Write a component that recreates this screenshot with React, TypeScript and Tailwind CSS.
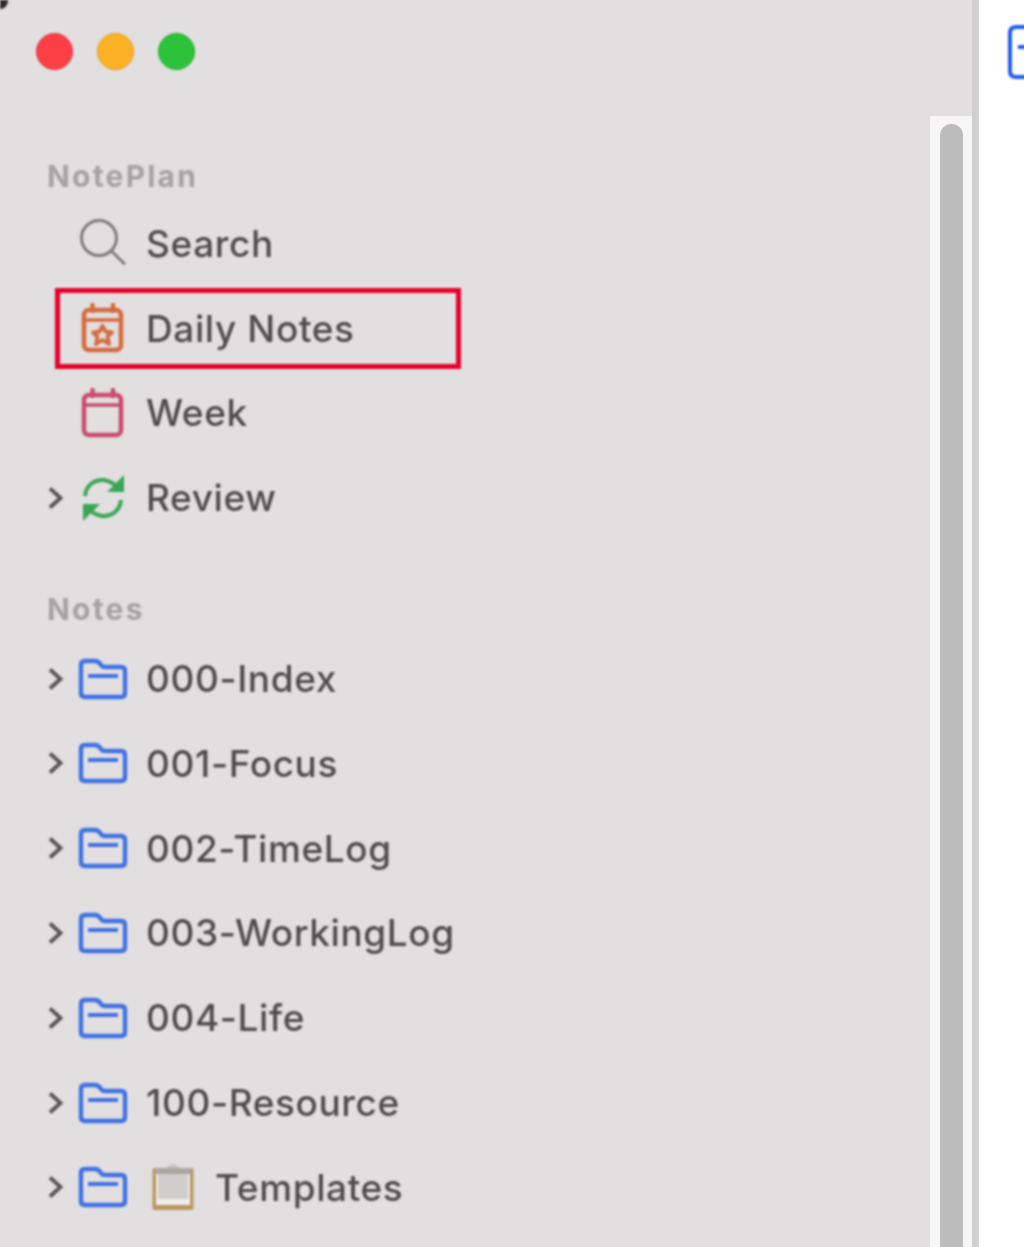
import React from 'react';

const Chevron = () => (
  <svg width="17" height="26" viewBox="0 0 17 26" fill="none" stroke="#565556" strokeWidth="3.8">
    <path d="M3 3.5 L13.5 13 L3 22.5" />
  </svg>
);

const SearchIcon = () => (
  <svg width="50" height="50" viewBox="0 0 50 50" fill="none" stroke="#7d7c7d" strokeWidth="3">
    <circle cx="21" cy="20" r="17.5" />
    <path d="M33.5 33 L47 46.5" />
  </svg>
);

const CalendarIcon = ({ color, star }: { color: string; star?: boolean }) => (
  <svg width="50" height="50" viewBox="0 0 50 50" fill="none" stroke={color} strokeWidth="4.5">
    <rect x="6" y="7" width="37" height="40" rx="5" />
    <path d="M6 17 H43" strokeWidth="3.5" />
    <path d="M14.5 2 V8 M35 2 V8" strokeWidth="4.5" strokeLinecap="round" />
    {star && (
      <path
        d="M24.500 23 L27.500 28.500 L34 29.500 L29.500 33.500 L31 41 L24.500 37 L18 41 L19.500 33.500 L15 29.500 L21.500 28.500 Z"
        strokeWidth="3.8"
        strokeLinejoin="round"
      />
    )}
  </svg>
);

const ReviewIcon = () => (
  <svg width="50" height="50" viewBox="0 0 50 50" fill="none" stroke="#3aa655" strokeWidth="4">
    <path d="M7 23 C8 12 17 6 26 7 C32 8 36 10 40 15" />
    <path d="M43 27 C42 38 33 44 24 43 C18 42 14 40 10 35" />
    <path d="M46 2 V19 H29 Z" fill="#3aa655" stroke="none" />
    <path d="M5 48 V31 H22 Z" fill="#3aa655" stroke="none" />
  </svg>
);

const FolderIcon = () => (
  <svg width="50" height="42" viewBox="0 0 50 42" fill="none" stroke="#3f72e4" strokeWidth="4.4">
    <path
      d="M3 7 C3 4 4.500 3 7 3 H17 C20 3 21 4 23 7 C24 8.500 25 9 27 9 H43 C46 9 47 10.500 47 13 V35 C47 38 45.500 39 43 39 H7 C4.500 39 3 38 3 35 Z"
      strokeLinejoin="round"
    />
    <path d="M10 18 H40" strokeWidth="4" />
  </svg>
);

const ClipboardIcon = () => (
  <svg width="42" height="46" viewBox="0 0 42 46">
    <rect x="0.500" y="4" width="41" height="42" rx="2" fill="#b8965f" />
    <rect x="4" y="7" width="34" height="34" fill="#efeeed" />
    <rect x="6" y="10" width="30" height="25" fill="#cfcecd" />
    <path d="M3 4 H39 V10 H3 Z" fill="#a9a6a3" />
    <path d="M15 4 C16 -1 26 -1 27 4 Z" fill="#c3c3c5" />
  </svg>
);

const SectionLabel = ({ children }: { children: React.ReactNode }) => (
  <div className="pl-[47px] text-[30px] leading-[36px] font-bold tracking-[2.2px] text-[#a4a2a3]">{children}</div>
);

const Row = ({
  label,
  icon,
  chevron,
  extra,
  boxed,
}: {
  label: string;
  icon: React.ReactNode;
  chevron?: boolean;
  extra?: React.ReactNode;
  boxed?: boolean;
}) => (
  <div className="relative flex h-[84.8px] items-center pl-[47px]">
    <div className="flex w-[31px] shrink-0 items-center">{chevron && <Chevron />}</div>
    <div className="flex w-[50px] shrink-0 items-center justify-center">{icon}</div>
    {extra && <div className="ml-[24px] flex w-[42px] shrink-0 items-center">{extra}</div>}
    <span
      className={`${extra ? 'ml-[21px]' : 'ml-[18px]'} text-[37px] leading-none font-medium tracking-[0.6px] text-[#4e4d4e]`}
    >
      {label}
    </span>
    {boxed && (
      <div className="absolute top-[2px] left-[55px] h-[81px] w-[406px] border-[5px] border-[#e6002b]" />
    )}
  </div>
);

const folders = ['000-Index', '001-Focus', '002-TimeLog', '003-WorkingLog', '004-Life', '100-Resource'];

export default function App() {
  return (
    <div className="flex h-[1247px] w-[1024px] overflow-hidden bg-white font-['Inter',sans-serif]">
      <aside className="relative w-[972px] shrink-0 overflow-hidden bg-[#e2dfe0]">
        <div className="flex flex-col blur-[0.8px]">
          <div className="absolute top-0 left-0 h-[9px] w-[8px] rounded-br-full bg-[#2b2b2b]" />
          <div className="flex gap-[24px] pt-[33px] pl-[36px]">
            <div className="h-[37px] w-[37px] rounded-full border border-[#e0313a] bg-[#fb3f45]" />
            <div className="h-[37px] w-[37px] rounded-full border border-[#e19b1a] bg-[#fdb124]" />
            <div className="h-[37px] w-[37px] rounded-full border border-[#1ea82a] bg-[#2cc23a]" />
          </div>

          <div className="mt-[88px]">
            <SectionLabel>NotePlan</SectionLabel>
          </div>
          <div className="mt-[7px]">
            <Row label="Search" icon={<SearchIcon />} />
            <Row label="Daily Notes" icon={<CalendarIcon color="#d56a3c" star />} boxed />
            <Row label="Week" icon={<CalendarIcon color="#c94a72" />} />
            <Row label="Review" icon={<ReviewIcon />} chevron />
          </div>

          <div className="mt-[51px]">
            <SectionLabel>Notes</SectionLabel>
          </div>
          <div className="mt-[9px]">
            {folders.map(name => (
              <Row key={name} label={name} icon={<FolderIcon />} chevron />
            ))}
            <Row label="Templates" icon={<FolderIcon />} chevron extra={<ClipboardIcon />} />
          </div>
        </div>

        <div className="absolute top-[116px] right-0 bottom-0 w-[42px] bg-[#f6f6f6] pt-[8px] pl-[10px]">
          <div className="h-full w-[23px] rounded-t-full bg-[#bcbcbc]" />
        </div>
      </aside>
      <div className="w-[7px] shrink-0 bg-[#d0d0d0]" />
      <main className="min-w-0 flex-1 overflow-hidden pt-[25px] pl-[29px]">
        <svg
          className="blur-[0.8px]"
          width="20"
          height="54"
          viewBox="0 0 20 54"
          fill="none"
          stroke="#1f5cf0"
          strokeWidth="4"
        >
          <path d="M20 2 H8 C4 2 2 4 2 8 V46 C2 50 4 52 8 52 H20" />
          <path d="M10 22 H20" />
        </svg>
      </main>
    </div>
  );
}
